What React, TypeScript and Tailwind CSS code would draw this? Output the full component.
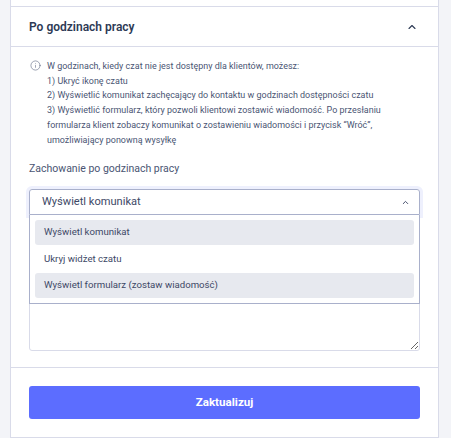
import { ChevronUp, Info } from "lucide-react";

const lines = [
  "1) Ukryć ikonę czatu",
  "2) Wyświetlić komunikat zachęcający do kontaktu w godzinach dostępności czatu",
  "3) Wyświetlić formularz, który pozwoli klientowi zostawić wiadomość. Po przesłaniu formularza klient zobaczy komunikat o zostawieniu wiadomości i przycisk “Wróć”, umożliwiający ponowną wysyłkę",
];

export default function App() {
  return (
    <div className="h-[438px] overflow-hidden bg-[#f3f4f8] pr-[12px] pl-[10px] font-['Roboto',sans-serif]">
      <div className="flex h-[438px] flex-col border-x border-b border-[#d9dbe9] bg-white">
        <div className="h-[7px] border-b border-[#d9dbe9]" />
        <header className="flex h-[40px] items-center justify-between border-b border-[#d9dbe9] pl-[18px] pr-[20px]">
          <h2 className="text-[12px] font-semibold text-[#2d3a55]">Po godzinach pracy</h2>
          <ChevronUp size={12} strokeWidth={2.25} className="text-[#2d3a55]" />
        </header>

        <section className="flex h-[321px] flex-col border-b border-[#d9dbe9] px-[18px] pt-[12px]">
          <div className="flex gap-[6px]">
            <Info size={11} strokeWidth={1.25} className="mt-[1px] ml-[1px] shrink-0 text-[#56617c]" />
            <div className="text-[8.95px] leading-[14.7px] tracking-[0.02px] text-[#4a5573]">
              <p>W godzinach, kiedy czat nie jest dostępny dla klientów, możesz:</p>
              {lines.map((l) => (
                <p key={l}>{l}</p>
              ))}
            </div>
          </div>

          <label className="mt-[15px] text-[10.5px] leading-[14px] text-[#4a5573]">Zachowanie po godzinach pracy</label>

          <div className="relative mt-[13px]">
            <div className="flex h-[26px] items-center justify-between rounded-t-[3px] border border-[#a9b0cb] pl-[12px] pr-[9px] text-[11.1px] text-[#3d4866] shadow-[0_0_0_3px_#eef0fd]">
              <span>Wyświetl komunikat</span>
              <ChevronUp size={9} strokeWidth={2.5} className="text-[#3d4866]" />
            </div>
            <ul className="absolute top-[26px] right-0 left-0 z-10 flex flex-col border border-t-0 border-[#a9b0cb] bg-white px-[5px] py-[5px] text-[9.65px] text-[#3d4866]">
              <li className="flex h-[25px] items-center rounded-[3px] bg-[#e7e9ef] px-[9px]">Wyświetl komunikat</li>
              <li className="flex h-[28px] items-center px-[9px]">Ukryj widżet czatu</li>
              <li className="flex h-[25px] items-center rounded-[3px] bg-[#e7e9ef] px-[9px]">Wyświetl formularz (zostaw wiadomość)</li>
            </ul>
            <textarea className="mt-[14px] block h-[122px] w-full rounded-[3px] border border-[#d9dbe9] bg-white outline-none" />
          </div>
        </section>

        <footer className="px-[18px] pt-[18px]">
          <button type="button" className="h-[33px] w-full rounded-[3px] bg-[#5c6dff] text-[11.6px] font-bold text-white">
            Zaktualizuj
          </button>
        </footer>
      </div>
    </div>
  );
}
